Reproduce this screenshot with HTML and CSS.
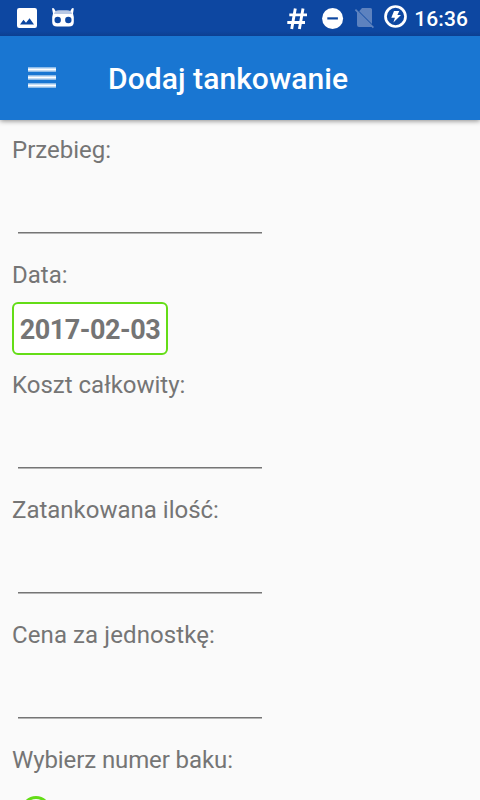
FILE: index.html
```html
<!DOCTYPE html>
<html lang="pl">
<head>
<meta charset="utf-8">
<title>Dodaj tankowanie</title>
<link rel="stylesheet" href="styles.css">
</head>
<body>
<div class="status">
  <svg class="status-icons" width="480" height="36" viewBox="0 0 480 36" aria-hidden="true">
    <path fill="#fff" fill-rule="evenodd" d="M19.2 8H34.8Q37 8 37 10.2V25.8Q37 28 34.8 28H19.2Q17 28 17 25.8V10.2Q17 8 19.2 8ZM20 24.5H34L29.6 18.2L26 22.7L23.5 19.8Z"/>
    <path fill="#fff" d="M52 8.6Q52.8 7.4 54 8.4L56.2 12H69.8L71.8 8.4Q73 7.4 73.8 8.6L73 13.5L73.8 17V22Q73.8 26.6 69 26.6H57Q52.2 26.6 52.2 22V17L53 13.5Z"/>
    <path fill="#b9c9e5" d="M54 14Q54.5 10.2 59 10.2H67Q71.5 10.2 72 14Z"/>
    <circle cx="57.7" cy="20" r="3.2" fill="#0d47a1"/>
    <circle cx="68.3" cy="20" r="3.2" fill="#0d47a1"/>
    <path fill="none" stroke="#fff" stroke-width="2.9" d="M295.3 8.5L291.7 29M303 8.5L299.4 29M289.3 14.9H307M287.3 22.5H305"/>
    <circle cx="332.6" cy="18.5" r="10.5" fill="#fff"/>
    <path fill="#0d47a1" d="M327.3 17.3H337.9V19.5H327.3Z"/>
    <path fill="#5d82bf" d="M362 8H370.5Q372 8 372 9.5V24L359.2 11.2ZM354.8 10.2L356 9L374 27L372.8 28.2L371.6 27H359Q357 27 357 25V12.4Z"/>
    <circle cx="395.5" cy="16.5" r="10" fill="none" stroke="#fff" stroke-width="2.7"/>
    <path fill="#fff" d="M394 11H399.3L397.4 15H401L393.4 22.5L394.9 17.7H391.3Z"/>
  </svg>
  <span class="clock">16:36</span>
</div>
<header class="toolbar">
  <svg class="menu" width="28" height="22" viewBox="0 0 28 22" aria-label="Menu">
    <path fill="#fff" fill-opacity=".5" d="M0 0H28V5H0ZM0 8H28V13H0ZM0 16H28V21H0Z"/>
    <path fill="#fff" d="M0 1.5H28V3.5H0ZM0 9.5H28V11.5H0ZM0 17.5H28V19.5H0Z"/>
  </svg>
  <h1>Dodaj tankowanie</h1>
</header>
<main>
  <label for="mileage">Przebieg:</label>
  <input id="mileage" type="text">
  <label>Data:</label>
  <button class="date" type="button">2017-02-03</button>
  <label for="cost">Koszt całkowity:</label>
  <input id="cost" type="text">
  <label for="amount">Zatankowana ilość:</label>
  <input id="amount" type="text">
  <label class="wide" for="price">Cena za jednostkę:</label>
  <input id="price" type="text">
  <label class="narrow">Wybierz numer baku:</label>
  <span class="radio"></span>
</main>
</body>
</html>
```
FILE: styles.css
```css
* {
  box-sizing: border-box;
}

body {
  margin: 0;
  height: 800px;
  overflow: hidden;
  background: #fafafa;
  color: #757575;
  font-family: Roboto, sans-serif;
}

.status {
  position: relative;
  display: flex;
  justify-content: flex-end;
  height: 36px;
  padding-right: 12px;
  background: linear-gradient(#0d47a1 31px, #0c3f91);
  color: #fff;
}

.status-icons {
  position: absolute;
  inset: 0;
}

.clock {
  font-size: 21px;
  font-weight: 500;
  line-height: 38px;
  letter-spacing: .1px;
}

.toolbar {
  display: flex;
  align-items: center;
  height: 84px;
  padding-left: 28px;
  background: #1976d2;
  color: #fff;
  box-shadow: 0 1px 5px rgba(0, 0, 0, .45);
}

.menu {
  margin-right: 52px;
}

h1 {
  margin: 2px 0 0;
  font-size: 30px;
  font-weight: 500;
  line-height: 36px;
  letter-spacing: .07px;
}

main {
  display: flex;
  flex-direction: column;
  align-items: flex-start;
  padding: 14px 12px 0;
}

label {
  font-size: 24px;
  line-height: 32px;
}

.wide {
  letter-spacing: .1px;
}

.narrow {
  letter-spacing: -.1px;
}

input {
  width: 244px;
  height: 68px;
  margin: 0 6px 25px;
  padding: 0;
  border: 0;
  outline: 0;
  background: linear-gradient(#757575 1px, #b5b5b5 1px) 0 66px / 100% 2px no-repeat;
  color: inherit;
  font: 27px Roboto, sans-serif;
}

.date {
  width: 156px;
  height: 53px;
  margin: 11px 0 14px;
  padding: 3px 0 0;
  border: 2px solid #64dd17;
  border-radius: 6px;
  background: #fff;
  color: #757575;
  font: bold 27px/46px Roboto, sans-serif;
  letter-spacing: -.45px;
}

.radio {
  width: 30px;
  height: 30px;
  margin: 20px 0 0 9px;
  border: 3px solid #64dd17;
  border-radius: 50%;
}
```
